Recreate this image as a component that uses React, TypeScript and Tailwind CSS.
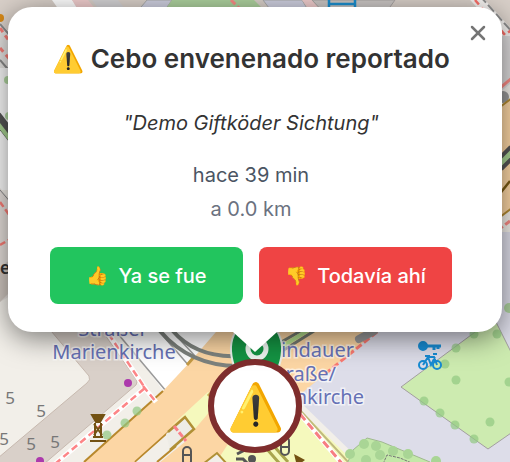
import { X } from 'lucide-react';

const houseNumbers = [
  [10, 404],
  [41, 417],
  [4, 445],
  [31, 450],
  [55, 448],
];

const trees = [
  [456, 348], [445, 364], [456, 380], [424, 401], [440, 413], [455, 425], [474, 439],
  [490, 422], [474, 334], [497, 334], [509, 382], [137, 411], [125, 423], [107, 435],
];

const bushes = [
  [350, 454], [364, 444], [376, 446], [393, 451], [408, 454], [366, 460], [436, 461], [380, 455],
];

function StreetMap() {
  return (
    <svg
      className="absolute inset-0 h-full w-full"
      viewBox="0 0 510 462"
      preserveAspectRatio="xMidYMid slice"
      role="img"
      aria-label="Mapa"
    >
      <rect width="510" height="462" fill="#f2efe9" />

      {/* blocks along the top edge */}
      <rect width="510" height="30" fill="#d9d0c9" />
      <path d="M52 0H72L92 20H66Z" fill="#fff" />
      <path d="M72 0H88L104 20H84Z" fill="#f0cdcd" />
      <path d="M92 0H118L134 20H106Z" fill="#d3d2d4" />
      <path d="M147 0H172L158 20H130Z" fill="#cfd0e0" stroke="#aaa" />
      <path d="M172 0H254L274 20H158Z" fill="#add19e" />
      <path d="M231 0L243 12" stroke="#fa8b85" strokeWidth="3" strokeDasharray="6 3" />
      <path d="M263 0H302L314 20H278Z" fill="#cfd0e0" stroke="#aaa" />
      <path d="M302 0H312L330 20H316Z" fill="#f0cdcd" />
      <path d="M312 0H395L385 14H325Z" fill="#cbc7c5" stroke="#a9a5a3" />
      <path d="M329 0V12M355 0V12M329 4H355" stroke="#1b8fd0" strokeWidth="2.5" />

      {/* left edge */}
      <path d="M0 22L34 60V130H0Z" fill="#e7e5e3" />
      <path d="M0 24L12 38M0 60L12 74" stroke="#8b8b8b" strokeWidth="2" />
      <path d="M0 28L12 45M0 48L12 62" stroke="#fa7f78" strokeWidth="3" strokeDasharray="5 4" />
      <circle cx="0" cy="18" r="4" fill="#d88a18" />
      <path d="M0 68H20V190H0Z" fill="#fafafa" />
      <circle cx="8" cy="80" r="4" fill="#b2d7a2" />
      <circle cx="9" cy="116" r="4" fill="#b2d7a2" />
      <path d="M-4 116L16 142" stroke="#555" strokeWidth="11" />
      <path d="M-4 121L16 147" stroke="#a8d292" strokeWidth="4" />
      <path d="M0 188L20 212V290L0 302Z" fill="#e5dfdb" />
      <path d="M0 190L12 204" stroke="#888" />
      <path d="M0 202L10 216M0 245L12 238" stroke="#fa7f78" strokeWidth="2.5" strokeDasharray="6 3" />
      <path d="M0 268L12 258V290L0 302Z" fill="#d0c7c0" />
      <text x="0" y="274" fontSize="17" fontWeight="600" fill="#333" className="font-['Noto_Sans',sans-serif]">
        e
      </text>

      {/* right edge */}
      <path d="M470 0H510V38Z" fill="#d9d0c9" />
      <path d="M474 -4L514 40" stroke="#f5f2f0" strokeWidth="11" />
      <path d="M480 -4L514 34" stroke="#8e8e8e" strokeWidth="2" strokeDasharray="9 3" />
      <path d="M475 0L505 35L514 28" fill="none" stroke="#fa6f68" strokeWidth="2.5" strokeDasharray="6 4" />
      <path d="M490 36H510V84L490 100Z" fill="#dcdadb" />
      <path d="M500 88L512 78" stroke="#fa8b85" strokeWidth="3" />
      <circle cx="503" cy="97" r="6" fill="#999" />
      <path d="M496 110L512 98V208L496 220Z" fill="#fcd6a4" stroke="#b48c33" strokeWidth="2" />
      <path d="M498 166L514 150" stroke="#555" strokeWidth="13" />
      <path d="M498 166L514 150" stroke="#a8d292" strokeWidth="5" />
      <path d="M498 196L510 181" stroke="#7a5a13" strokeWidth="2.5" />
      <path d="M498 230L514 218" stroke="#fa8b85" strokeWidth="3" strokeDasharray="6 3" />
      <path d="M490 232H510V340H490Z" fill="#dddde9" />
      <circle cx="509" cy="308" r="5" fill="#add19e" />

      {/* L-shaped building in the lower left */}
      <path
        d="M46 325L89 376Q91 380 87 383L-2 458V464H44L136 385Q138 382 136 379L98 325Z"
        fill="#d9d0c9"
        stroke="#c7b9af"
      />
      <path d="M113 325H235L166 394Z" fill="#fff" />
      <path d="M113 328L166 391M158 330L190 367M171 330L195 356" stroke="#9a9a9a" strokeWidth="1.5" fill="none" />

      {/* main road */}
      <path d="M84 462L163 391L190 362L222 325H390L300 400L230 462Z" fill="#fcd6a4" />
      <path d="M84 462L163 391" stroke="#b8882c" strokeWidth="2" />
      <path d="M187 365L194 357" stroke="#c59a43" strokeWidth="3" />
      <path d="M135 462L172 429" stroke="#b8882c" strokeWidth="2" />
      <path d="M136 462L172 430L186 441L158 464Z" fill="#f2efe9" />
      <path d="M157 462L176 446" stroke="#b8882c" strokeWidth="2" />
      <path d="M215 464L228 444L290 400L356 464Z" fill="#f5f9bd" />
      <path d="M170 427L208 392L218 402L194 430L184 416Z" fill="#f5f9bd" />
      <path d="M166 434L185 417L194 429L170 450Z" fill="#eeece6" />
      <path d="M168 432L185 417L194 429L170 450" fill="none" stroke="#b09035" strokeWidth="2.5" />
      <path d="M174 426L186 441" stroke="#fa7f88" strokeWidth="3" strokeDasharray="6 2" />
      <path d="M208 396L216 388" stroke="#c5a550" strokeWidth="3" />
      <path d="M203 464L217 453L227 464Z" fill="#f2efe9" stroke="#b09035" strokeWidth="2" />
      <path d="M266 448L280 464M272 444L288 462" stroke="#a9a54d" strokeWidth="3" />
      <path d="M298 408L350 464" stroke="#c0ba7c" strokeWidth="2" />

      {/* tram tracks */}
      <g fill="none" stroke="#7d827d" strokeWidth="4">
        <path d="M172 330Q196 358 238 356" />
        <path d="M160 331Q190 366 238 366" />
      </g>
      <path d="M276 345L306 328M279 353L314 331" stroke="#747b70" strokeWidth="3" />
      <path d="M278 349L310 329" stroke="#b4e08e" strokeWidth="4" />

      {/* square on the right */}
      <path d="M510 325H384L296 398L362 462H510Z" fill="#dddde9" />
      <path d="M325 374L382 328" stroke="#fa7a72" strokeWidth="3" strokeDasharray="7 3" />
      <path d="M359 339L374 331" stroke="#999" strokeWidth="8" strokeLinecap="round" />
      <path d="M300 414L344 466" stroke="#fff" strokeWidth="5" />
      <path d="M300 414L344 466" stroke="#f77e82" strokeWidth="3" strokeDasharray="8 4" />
      <path d="M401 387L494 318L514 358V431L488 449Z" fill="#cdebb0" stroke="#a39ea0" />
      <path d="M347 464L353 450L367 438L382 442L430 462V464Z" fill="#c3e8a8" stroke="#a0b890" />
      <path d="M383 464L387 455L400 458L414 464" fill="none" stroke="#777" strokeDasharray="3 1" />
      {trees.map(([x, y]) => (
        <circle key={`${x}-${y}`} cx={x} cy={y} r="4.5" fill="#92c982" fillOpacity="0.7" />
      ))}
      {bushes.map(([x, y]) => (
        <circle key={`${x}-${y}`} cx={x} cy={y} r="5" fill="#a9d595" />
      ))}

      {/* footpaths */}
      <path d="M55 464L145 388L110 336M143 386L156 402" fill="none" stroke="#fff" strokeWidth="5" />
      <path
        d="M55 464L145 388L110 336M143 386L156 402"
        fill="none"
        stroke="#fd8587"
        strokeWidth="2.5"
        strokeDasharray="7 4"
      />
      <circle cx="128" cy="383" r="4" fill="#ac39ac" />
      <circle cx="40" cy="461" r="4" fill="#ac39ac" />

      {/* artwork symbol */}
      <g fill="none" stroke="#735112" strokeWidth="2">
        <path d="M92 415H104L100 422H96Z" fill="#735112" />
        <path d="M94 424L102 435M102 424L94 435M95 423V437M101 423V437M90 441H106M93 437H103" />
      </g>

      {/* rental bike symbol */}
      <g fill="none" stroke="#178bd2" strokeWidth="2">
        <circle cx="423" cy="346" r="4" fill="#178bd2" />
        <path d="M426 346H441M434 346V350M438 346V349" strokeWidth="3" />
        <circle cx="423" cy="365" r="4" />
        <circle cx="437" cy="365" r="4" />
        <path d="M423 365L428 357H434L437 365M428 357L431 365L435 357M425 356H430M433 354H437" />
      </g>

      {/* bicycle stands and steps */}
      <g fill="none" stroke="#555" strokeWidth="2">
        <rect x="183" y="447" width="8" height="18" rx="4" />
        <path d="M183 455H191" />
        <rect x="281" y="437" width="8" height="18" rx="4" />
        <path d="M281 447H289" />
        <path d="M237 454L245 450M236 459H243L248 464" strokeWidth="3" />
        <circle cx="252" cy="459" r="3" fill="#555" />
      </g>
      <path d="M294 454L305 460L297 466Z" fill="#735112" />

      <g
        fill="#6671b5"
        stroke="#fff"
        strokeOpacity="0.6"
        strokeWidth="3"
        paintOrder="stroke"
        fontSize="20"
        className="font-['Noto_Sans',sans-serif]"
      >
        <text x="113" y="336" textAnchor="middle">Straßer</text>
        <text x="114" y="359" textAnchor="middle">Marienkirche</text>
        <text x="354" y="357" textAnchor="end">indauer</text>
        <text x="336" y="381" textAnchor="end">raße/</text>
        <text x="364" y="404" textAnchor="end">nkirche</text>
      </g>
      <g fill="#777" fontSize="17" textAnchor="middle" className="font-['Noto_Sans',sans-serif]">
        {houseNumbers.map(([x, y]) => (
          <text key={`${x}-${y}`} x={x} y={y}>5</text>
        ))}
      </g>

      {/* own position */}
      <path d="M236 331Q227 345 234 366H279Q286 345 277 331Z" fill="#149443" stroke="#e9efe9" strokeWidth="2" />
      <circle cx="257" cy="349" r="9" fill="#149443" stroke="#edf5ef" strokeWidth="5" />
    </svg>
  );
}

export default function App() {
  return (
    <main className="relative min-h-screen overflow-hidden px-2 pt-[7px] font-['Inter',sans-serif]">
      <StreetMap />

      <div className="relative flex flex-col items-center">
        <section
          role="dialog"
          aria-labelledby="report-title"
          className="relative w-full rounded-3xl bg-white pt-8 pr-[50px] pb-7 pl-[42px] text-center text-xl text-[#333] shadow-[0_6px_28px_rgba(0,0,0,0.5)]"
        >
          <button
            type="button"
            aria-label="Cerrar"
            className="absolute top-3 right-2.5 flex size-7 items-center justify-center text-[#757575]"
          >
            <X className="size-6" strokeWidth={2.5} />
          </button>

          <h1 id="report-title" className="text-[26px] leading-10 font-semibold whitespace-nowrap">
            ⚠️ Cebo envenenado reportado
          </h1>
          <p className="mt-[30px] leading-7 italic">"Demo Giftköder Sichtung"</p>
          <p className="mt-6 leading-7 text-[#4b5563]">hace 39 min</p>
          <p className="mt-2 leading-6 text-[#6b7280]">a 0.0 km</p>

          <div className="mt-[26px] flex gap-4 font-medium text-white">
            <button
              type="button"
              className="flex h-[57px] flex-1 items-center justify-center gap-2.5 rounded-lg bg-[#22c55e] whitespace-nowrap"
            >
              <span className="text-lg">👍</span>
              Ya se fue
            </button>
            <button
              type="button"
              className="flex h-[57px] flex-1 items-center justify-center gap-2.5 rounded-lg bg-[#ef4444] whitespace-nowrap"
            >
              <span className="text-lg">👎</span>
              Todavía ahí
            </button>
          </div>
        </section>

        <div className="h-5 w-11 bg-white [clip-path:polygon(0_0,100%_0,50%_100%)]" />
        <div className="mt-[7px] flex size-[94px] items-center justify-center rounded-full border-6 border-[#7f2d2d] bg-white text-[46px] leading-none">
          ⚠️
        </div>
      </div>
    </main>
  );
}
